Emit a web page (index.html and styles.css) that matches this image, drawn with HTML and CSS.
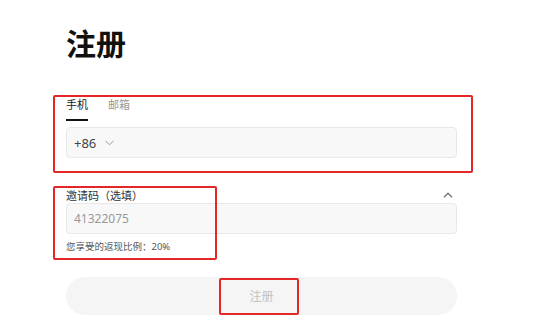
FILE: index.html
```html
<!DOCTYPE html>
<html lang="zh-CN">
<head>
  <meta charset="UTF-8" />
  <title>注册</title>
  <link rel="stylesheet" href="styles.css">
</head>
<body>

  <div class="page">
    <h1 class="title">注册</h1>

    <div class="tabs">
      <span class="tab active">手机</span>
      <span class="tab">邮箱</span>
    </div>

    <div class="field">
      <span class="code">+86</span>
      <svg class="chev" width="9" height="6" viewBox="0 0 9 6">
        <path d="M0.5 0.8 L4.5 4.8 L8.5 0.8" fill="none" stroke="#999" stroke-width="1"/>
      </svg>
    </div>

    <div class="label-row">
      <span class="label">邀请码（选填）</span>
      <svg class="chev-up" width="10" height="6" viewBox="0 0 10 6">
        <path d="M1 5.2 L5 1.2 L9 5.2" fill="none" stroke="#777" stroke-width="1.4"/>
      </svg>
    </div>

    <div class="field">
      <span class="placeholder">41322075</span>
    </div>

    <p class="help">您享受的返现比例：20%</p>

    <button class="submit">注册</button>
  </div>

  <div class="mark mark-phone"></div>
  <div class="mark mark-invite"></div>
  <div class="mark mark-button"></div>

</body>
</html>
```

FILE: styles.css
```css
body {
  margin: 0;
  font-family: "Noto Sans", "Noto Sans CJK SC", sans-serif;
  background: #fff;
  color: #222;
}
.page {
  width: 391px;
  padding: 24px 0 0 66px;
}
.title {
  margin: 0 0 30px;
  font-size: 30px;
  font-weight: 700;
  line-height: 40px;
  color: #111;
}
.tabs {
  display: flex;
  gap: 20px;
  height: 33px;
}
.tab {
  box-sizing: border-box;
  height: 27px;
  padding-top: 3px;
  font-size: 11px;
  line-height: 16px;
  color: #999;
  border-bottom: 2px solid transparent;
}
.tab.active {
  color: #1a1a1a;
  border-bottom-color: #111;
}
.field {
  display: flex;
  align-items: center;
  gap: 9px;
  height: 29px;
  padding: 0 7px;
  border: 1px solid #e8e8e8;
  border-radius: 4px;
  background: #f8f8f8;
}
.code {
  font-size: 13px;
  color: #444;
}
.placeholder {
  font-size: 12px;
  color: #999;
}
.label-row {
  display: flex;
  justify-content: space-between;
  align-items: center;
  margin-top: 28px;
  height: 17px;
  padding-right: 4px;
}
.label {
  font-size: 11px;
  color: #333;
}
.help {
  margin: 6px 0 0;
  font-size: 9.5px;
  line-height: 14px;
  color: #555;
}
.submit {
  display: block;
  width: 100%;
  height: 38px;
  margin-top: 23px;
  border: none;
  border-radius: 19px;
  background: #f5f5f5;
  color: #c2c2c2;
  font-family: "Noto Sans", "Noto Sans CJK SC", sans-serif;
  font-size: 12px;
}

/* annotation boxes */
.mark {
  position: absolute;
  border: 2px solid #e32626;
  border-radius: 2px;
}
.mark-phone { left: 53px; top: 95px; width: 416px; height: 74px; }
.mark-invite { left: 53px; top: 186px; width: 160px; height: 70px; }
.mark-button { left: 219px; top: 278px; width: 76px; height: 33px; }
```
